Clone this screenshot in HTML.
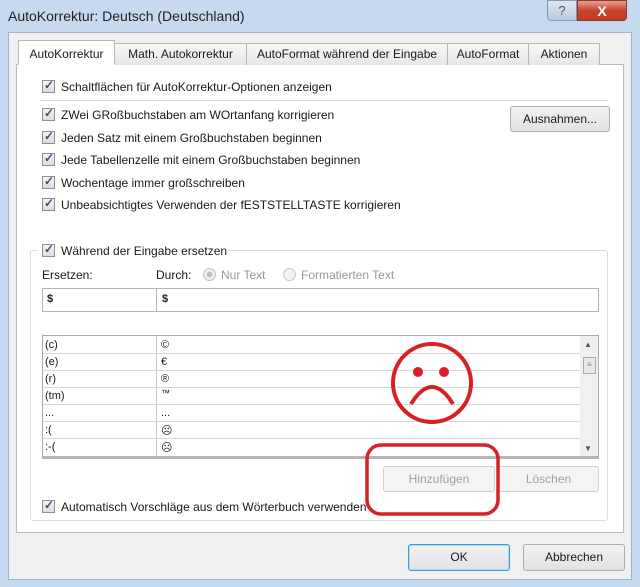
<!DOCTYPE html>
<html><head><meta charset="utf-8"><style>
*{box-sizing:border-box;margin:0;padding:0}
body{width:640px;height:587px;background:#c7d9ee;font-family:"Liberation Sans",sans-serif;font-size:12px;color:#1a1a1a;position:relative;overflow:hidden}
.a{position:absolute}
.title{left:8px;top:8px;font-size:14px;color:#222}
.client{left:8px;top:32px;width:624px;height:548px;background:#f0f0f0;border:1px solid #9fb3ca}
.tab{top:43px;height:22px;border:1px solid #b8b8b8;border-bottom:none;background:linear-gradient(#f7f7f7,#e6e6e6);text-align:center;line-height:21px;font-size:12px}
.panel{left:16px;top:64px;width:608px;height:469px;background:#fff;border:1px solid #b8b8b8}
.cb{width:13px;height:13px;border:1px solid #8e8f8f;background:linear-gradient(#f4f4f4,#dcdcdc)}
.cb:after{content:"✓";position:absolute;left:1px;top:-3px;font-size:12px;color:#3a4f8a;font-weight:bold}
.btn{border:1px solid #adadad;border-radius:3px;background:linear-gradient(#f2f2f2,#e2e2e2);text-align:center;font-size:12px}
.row{left:43px;width:537px;height:17px;border-bottom:1px solid #d8d8d8;font-size:11px}
</style></head><body>
<div class="a title">AutoKorrektur: Deutsch (Deutschland)</div>
<div class="a" style="left:547px;top:0;width:30px;height:21px;border:1px solid #8499b0;border-radius:0 0 0 4px;background:linear-gradient(#dfe8f3,#b9cade);text-align:center;color:#556;font-size:13px;line-height:20px">?</div>
<div class="a" style="left:577px;top:0;width:50px;height:21px;border:1px solid #8a3a30;border-radius:0 0 4px 0;background:linear-gradient(#e8a093,#c9442e 50%,#c23a25);text-align:center;color:#fff;font-weight:bold;font-size:14px;line-height:20px">X</div>
<div class="a client"></div>
<div class="a panel"></div>
<div class="a tab" style="left:18px;top:40px;width:97px;height:25px;background:#fff;border-bottom:1px solid #fff;z-index:2;line-height:27px">AutoKorrektur</div>
<div class="a tab" style="left:114px;width:133px">Math. Autokorrektur</div>
<div class="a tab" style="left:246px;width:202px">AutoFormat während der Eingabe</div>
<div class="a tab" style="left:447px;width:82px">AutoFormat</div>
<div class="a tab" style="left:528px;width:72px">Aktionen</div>

<div class="a cb" style="left:42px;top:80px"></div><div class="a" style="left:61px;top:80px">Schaltflächen für AutoKorrektur-Optionen anzeigen</div>
<div class="a" style="left:40px;top:100px;width:568px;height:1px;background:#dcdcdc"></div>
<div class="a cb" style="left:42px;top:108px"></div><div class="a" style="left:61px;top:108px">ZWei GRoßbuchstaben am WOrtanfang korrigieren</div>
<div class="a cb" style="left:42px;top:131px"></div><div class="a" style="left:61px;top:131px">Jeden Satz mit einem Großbuchstaben beginnen</div>
<div class="a cb" style="left:42px;top:153px"></div><div class="a" style="left:61px;top:153px">Jede Tabellenzelle mit einem Großbuchstaben beginnen</div>
<div class="a cb" style="left:42px;top:176px"></div><div class="a" style="left:61px;top:176px">Wochentage immer großschreiben</div>
<div class="a cb" style="left:42px;top:198px"></div><div class="a" style="left:61px;top:198px">Unbeabsichtigtes Verwenden der fESTSTELLTASTE korrigieren</div>
<div class="a btn" style="left:510px;top:106px;width:100px;height:26px;line-height:24px">Ausnahmen...</div>

<div class="a" style="left:30px;top:250px;width:578px;height:271px;border:1px solid #dcdcdc;border-radius:3px"></div>
<div class="a" style="left:38px;top:243px;width:190px;height:16px;background:#fff"></div>
<div class="a cb" style="left:42px;top:244px"></div><div class="a" style="left:61px;top:244px">Während der Eingabe ersetzen</div>
<div class="a" style="left:42px;top:268px">Ersetzen:</div>
<div class="a" style="left:156px;top:268px">Durch:</div>
<div class="a" style="left:203px;top:268px;width:13px;height:13px;border-radius:50%;border:1px solid #c0c0c0;background:radial-gradient(#bbb 30%,#eee 40%)"></div>
<div class="a" style="left:221px;top:268px;color:#999">Nur Text</div>
<div class="a" style="left:283px;top:268px;width:13px;height:13px;border-radius:50%;border:1px solid #c8c8c8;background:#f2f2f2"></div>
<div class="a" style="left:301px;top:268px;color:#999">Formatierten Text</div>
<div class="a" style="left:42px;top:288px;width:557px;height:24px;border:1px solid #b5b5b5"></div>
<div class="a" style="left:156px;top:289px;width:1px;height:22px;background:#b5b5b5"></div>
<div class="a" style="left:47px;top:293px;font-weight:bold;font-size:11px">$</div>
<div class="a" style="left:162px;top:293px;font-weight:bold;font-size:11px">$</div>

<div class="a" style="left:42px;top:335px;width:557px;height:124px;border:1px solid #aaa;border-bottom:3px solid #b5b5b5"></div>
<div class="a" style="left:156px;top:336px;width:1px;height:120px;background:#c8c8c8"></div>
<div class="a" style="left:580px;top:336px;width:18px;height:120px;background:#f0f0f0"></div>
<div class="a" style="left:583px;top:357px;width:13px;height:17px;border:1px solid #aaa;background:#e8e8e8;font-size:8px;text-align:center;line-height:14px;color:#777">≡</div>
<div class="a" style="left:584px;top:340px;font-size:8px;color:#555">▲</div>
<div class="a" style="left:584px;top:444px;font-size:8px;color:#555">▼</div>
<div class="a row" style="top:337px"><span class="a" style="left:2px;top:2px">(c)</span><span class="a" style="left:118px;top:2px">©</span></div>
<div class="a row" style="top:354px"><span class="a" style="left:2px;top:2px">(e)</span><span class="a" style="left:118px;top:2px">€</span></div>
<div class="a row" style="top:371px"><span class="a" style="left:2px;top:2px">(r)</span><span class="a" style="left:118px;top:2px">®</span></div>
<div class="a row" style="top:388px"><span class="a" style="left:2px;top:2px">(tm)</span><span class="a" style="left:118px;top:0px;font-size:9px">™</span></div>
<div class="a row" style="top:405px"><span class="a" style="left:2px;top:2px">...</span><span class="a" style="left:118px;top:2px">...</span></div>
<div class="a row" style="top:422px"><span class="a" style="left:2px;top:2px">:(</span><span class="a" style="left:118px;top:2px">☹</span></div>
<div class="a row" style="top:439px;border:none"><span class="a" style="left:2px;top:2px">:-(</span><span class="a" style="left:118px;top:2px">☹</span></div>

<div class="a btn" style="left:383px;top:466px;width:112px;height:26px;line-height:24px;color:#a0a0a0;background:#f4f4f4;border-color:#d0d0d0">Hinzufügen</div>
<div class="a btn" style="left:498px;top:466px;width:101px;height:26px;line-height:24px;color:#a0a0a0;background:#f4f4f4;border-color:#d0d0d0">Löschen</div>
<div class="a cb" style="left:42px;top:500px"></div><div class="a" style="left:61px;top:500px">Automatisch Vorschläge aus dem Wörterbuch verwenden</div>

<svg class="a" style="left:0;top:0" width="640" height="587">
<circle cx="432" cy="383" r="39" fill="none" stroke="#d8202a" stroke-width="4"/>
<circle cx="418" cy="372" r="5" fill="#d8202a"/><circle cx="444" cy="372" r="5" fill="#d8202a"/>
<path d="M411 404 Q432 370 453 404" fill="none" stroke="#d8202a" stroke-width="4"/>
<rect x="367" y="445" width="131" height="69" rx="14" fill="none" stroke="#d8202a" stroke-width="3.5"/>
</svg>

<div class="a btn" style="left:408px;top:544px;width:102px;height:27px;line-height:25px;border-color:#3c9ad6;box-shadow:inset 0 0 0 1px #a9dcf5">OK</div>
<div class="a btn" style="left:523px;top:544px;width:102px;height:27px;line-height:25px">Abbrechen</div>
</body></html>
